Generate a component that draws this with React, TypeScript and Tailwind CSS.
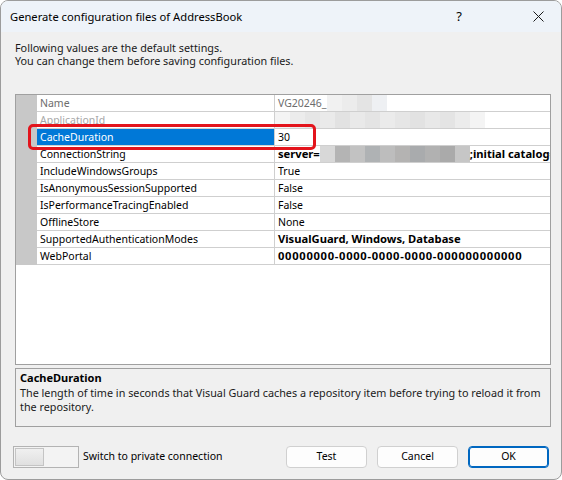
import React from "react";

type Row = {
  name: string;
  value: React.ReactNode;
  dim?: boolean;
  selected?: boolean;
};

function Blur({ shades, w = 15 }: { shades: string[]; w?: number }) {
  return (
    <span className="inline-flex h-[16px] align-top shrink-0">
      {shades.map((c, i) => (
        <span key={i} className="h-full" style={{ width: w, background: c }} />
      ))}
    </span>
  );
}

const rows: Row[] = [
  {
    name: "Name",
    dim: true,
    value: (
      <span className="flex items-center text-[#6d6d6d]">
        VG20246_
        <Blur shades={["#f1f1f1", "#ececec", "#e4e4e4", "#eef0f3"]} />
      </span>
    ),
  },
  {
    name: "ApplicationId",
    dim: true,
    value: (
      <span className="flex items-center -ml-[3px]">
        <Blur
          shades={["#f4f4f4", "#ececec", "#e6e6e6", "#eaeaea", "#e2e2e2", "#e9e9e9", "#e4e4e4", "#ebebeb", "#e6e6e6", "#e2e2e2", "#e8e8e8", "#e4e4e4", "#ececec", "#f4f4f4"]}
        />
      </span>
    ),
  },
  { name: "CacheDuration", value: "30", selected: true },
  {
    name: "ConnectionString",
    value: (
      <span className="flex items-center font-bold whitespace-nowrap text-[11.2px]">
        server=
        <Blur
          w={15}
          shades={["#d8d8d8", "#b4b4b4", "#c2c2c2", "#afb2b4", "#bdbdbd", "#b4b3b2", "#a9abad", "#b1b1b1", "#aaaaaa", "#c6c6c6"]}
        />
        ;initial catalog=
      </span>
    ),
  },
  { name: "IncludeWindowsGroups", value: "True" },
  { name: "IsAnonymousSessionSupported", value: "False" },
  { name: "IsPerformanceTracingEnabled", value: "False" },
  { name: "OfflineStore", value: "None" },
  {
    name: "SupportedAuthenticationModes",
    value: <span className="font-bold text-[11.2px]">VisualGuard, Windows, Database</span>,
  },
  {
    name: "WebPortal",
    value: (
      <span className="font-bold text-[11.2px] tracking-[0.7px]">00000000-0000-0000-0000-000000000000</span>
    ),
  },
];

export default function App() {
  return (
    <div
      className="w-[562px] h-[480px] bg-white text-[10.8px] text-black"
      style={{ fontFamily: '"Segoe UI", "Noto Sans", "Open Sans", sans-serif' }}
    >
      <div className="relative h-full flex flex-col rounded-lg border border-[#9c9c9c] bg-[#f0f0f0] overflow-hidden">
        {/* title bar */}
        <div className="h-[31px] shrink-0 flex items-center bg-[#eef3f9] pl-[9px] text-[11.2px]">
          <span className="flex-1 leading-none">Generate configuration files of AddressBook</span>
          <span className="w-[16px] text-center text-[13px] mr-[66px]">?</span>
          <svg width="11" height="11" viewBox="0 0 11 11" className="mr-[17px]">
            <path d="M0.5 0.5 L10.5 10.5 M10.5 0.5 L0.5 10.5" stroke="#1a1a1a" strokeWidth="1" />
          </svg>
        </div>

        <div className="flex-1 flex flex-col pl-[14px] pr-[10px]">
          <div className="pt-[9px] text-[#1a1a1a]">
            <div className="h-[13px] leading-[13px]">Following values are the default settings.</div>
            <div className="h-[13px] leading-[13px]">You can change them before saving configuration files.</div>
          </div>

          {/* property grid */}
          <div className="mt-[27px] h-[271px] border border-[#a0a0a0] bg-white text-[10.5px]">
            <div className="flex">
              <div className="w-[21px] h-[170px] bg-[#c8c8c8] shrink-0" />
              <div className="flex-1 min-w-0">
                {rows.map((r) => (
                  <div key={r.name} className="flex h-[17px] border-b border-[#cfcfcf]">
                    <div
                      className={
                        "w-[237px] shrink-0 pl-[3px] leading-[16px] whitespace-nowrap " +
                        (r.selected ? "bg-[#0078d7] text-white" : r.dim ? "text-[#6d6d6d]" : "")
                      }
                    >
                      {r.name === "ApplicationId" ? <span className="text-[#a8a8a8]">{r.name}</span> : r.name}
                    </div>
                    <div className="flex-1 min-w-0 border-l border-[#cfcfcf] pl-[3px] leading-[16px] overflow-hidden whitespace-nowrap">
                      {r.value}
                    </div>
                  </div>
                ))}
              </div>
            </div>
          </div>

          {/* description */}
          <div className="mt-[3px] h-[59px] border border-[#a0a0a0] px-[4px] pt-[1px]">
            <div className="font-bold leading-[16px] text-[11px]">CacheDuration</div>
            <div className="leading-[14px] text-[#1a1a1a]">
              The length of time in seconds that Visual Guard caches a repository item before trying to reload it from the repository.
            </div>
          </div>

          {/* footer */}
          <div className="mt-[19px] flex items-center -ml-[2px] mr-[2px] text-[10.5px]">
            <div className="w-[66px] h-[22px] border border-[#b3b3b3] bg-[#f3f3f3] p-[1px]">
              <div className="w-[29px] h-full border border-[#c4c4c4] bg-gradient-to-b from-[#f0f0f0] to-[#e0e0e0]" />
            </div>
            <span className="ml-[4px] flex-1">Switch to private connection</span>
            <div className="flex gap-[10px]">
              <button className="w-[81px] h-[22px] rounded-[4px] border border-[#d0d0d0] bg-[#fdfdfd]">Test</button>
              <button className="w-[81px] h-[22px] rounded-[4px] border border-[#d0d0d0] bg-[#fdfdfd]">Cancel</button>
              <button className="w-[81px] h-[22px] rounded-[4px] border border-[#0067c0] bg-[#fdfdfd] shadow-[inset_0_0_0_1px_#0067c0]">OK</button>
            </div>
          </div>
        </div>

        {/* highlight marker */}
        <div className="absolute left-[27px] top-[123px] w-[288px] h-[26px] rounded-[5px] border-[3px] border-[#e3141c]" />
      </div>
    </div>
  );
}
